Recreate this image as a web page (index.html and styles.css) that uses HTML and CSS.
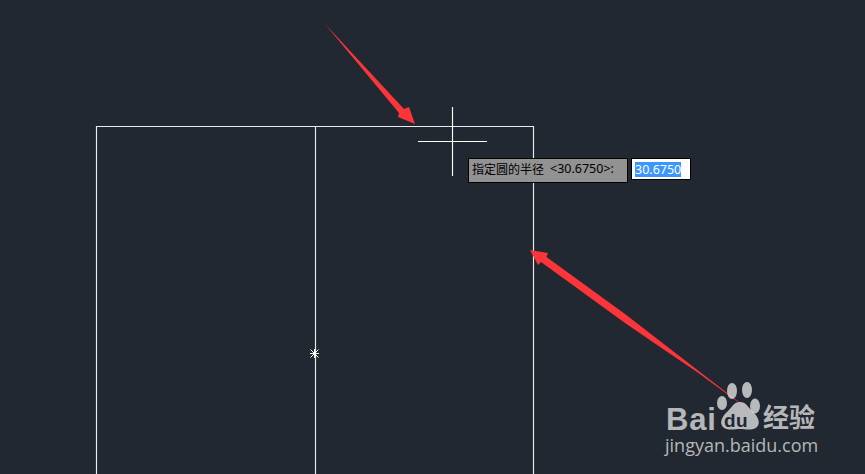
FILE: index.html
```html
<!DOCTYPE html>
<html lang="zh">
<head>
<meta charset="utf-8">
<title>指定圆的半径</title>
<link rel="stylesheet" href="styles.css">
</head>
<body>
<main class="canvas">
  <svg class="drawing" width="865" height="474" viewBox="0 0 865 474">
    <g class="cad">
      <path d="M96.5 474V126.5H533.5V474"/>
      <path d="M315.5 126.5V474"/>
    </g>
    <g class="cursor">
      <path d="M452.5 107V176"/>
      <path d="M418 141.500H487"/>
    </g>
    <g class="snap">
      <path d="M314.500 349V358M310 353.500H319M310.500 349.500L318.500 357.500M318.500 349.500L310.500 357.500"/>
    </g>
    <g class="arrow">
      <polygon points="325,24 404,109 409,107 415,124 398,117 399,113"/>
      <polygon points="530,250 548,253 546.500,257 625,314 753,413 697,372 663,349 625,323 541,262 538,265"/>
    </g>
  </svg>

  <div class="prompt">
    <span class="prompt-label">指定圆的半径</span>
    <span class="prompt-value">&lt;30.6750&gt;:</span>
  </div>
  <div class="entry"><span class="entry-selected">30.6750</span></div>

  <div class="watermark">
    <svg class="paw" width="50" height="50" viewBox="0 0 50 50">
      <ellipse cx="17" cy="9" rx="5" ry="8"/>
      <ellipse cx="32" cy="8" rx="5" ry="8"/>
      <ellipse cx="7" cy="21" rx="5" ry="7"/>
      <ellipse cx="40" cy="24" rx="5" ry="7.500"/>
      <path d="M25 20C31 20 33 25 37 29C43 34 46 41 42 45C38 49 30 47 25 47C20 47 12 49 8 45C4 41 7 34 13 29C17 25 19 20 25 20Z"/>
    </svg>
    <span class="wm-bai">Bai</span>
    <span class="wm-du">du</span>
    <span class="wm-jy">经验</span>
    <span class="wm-url">jingyan.baidu.com</span>
  </div>
</main>
</body>
</html>
```

FILE: styles.css
```css
html, body {
  margin: 0;
  padding: 0;
  background: #222831;
}

.canvas {
  position: relative;
  width: 865px;
  height: 474px;
  overflow: hidden;
  background: #222831;
}

.drawing {
  position: absolute;
  left: 0;
  top: 0;
  display: block;
}

.cad path {
  fill: none;
  stroke: #e8eaec;
  stroke-width: 1.15;
}

.cursor path {
  fill: none;
  stroke: #ffffff;
  stroke-width: 1.15;
}

.snap path {
  fill: none;
  stroke: #ffffff;
  stroke-width: 1;
}

.arrow polygon {
  fill: #fb3539;
}

.prompt {
  position: absolute;
  left: 468px;
  top: 158px;
  width: 160px;
  height: 25px;
  box-sizing: border-box;
  border: 1px solid #000000;
  background: #929292;
  display: flex;
  align-items: center;
  gap: 6px;
  padding: 0 0 3px 3px;
  color: #000000;
  font: 12px/16px "Noto Sans CJK SC", "Liberation Sans", sans-serif;
  white-space: nowrap;
}

.prompt-value {
  font-family: "Noto Sans", sans-serif;
  font-size: 12.500px;
}

.entry {
  position: absolute;
  left: 631px;
  top: 158px;
  width: 60px;
  height: 22px;
  box-sizing: border-box;
  border: 1px solid #000000;
  background: #ffffff;
  display: flex;
  align-items: center;
  padding-left: 3px;
}

.entry-selected {
  background: #3b96ff;
  color: #ffffff;
  font: 12.500px/15px "Noto Sans", sans-serif;
}

.watermark {
  position: absolute;
  left: 660px;
  top: 380px;
  width: 165px;
  height: 80px;
  color: #b6b7b8;
}

.paw {
  position: absolute;
  left: 55px;
  top: 2px;
  fill: #f7f7f7;
  fill-opacity: 0.7;
}

.wm-bai {
  position: absolute;
  left: 6px;
  top: 26px;
  letter-spacing: 0.8px;
  font: bold 31px/28px "Liberation Sans", sans-serif;
}

.wm-du {
  position: absolute;
  left: 64px;
  top: 31px;
  color: #222831;
  letter-spacing: 0.5px;
  font: bold 19px/20px "Liberation Sans", sans-serif;
}

.wm-jy {
  position: absolute;
  left: 103px;
  top: 20px;
  font: bold 26px/32px "Noto Sans CJK SC", sans-serif;
}

.wm-url {
  position: absolute;
  left: 5px;
  top: 54px;
  font: 18px/22px "Open Sans", "Liberation Sans", sans-serif;
}
```
